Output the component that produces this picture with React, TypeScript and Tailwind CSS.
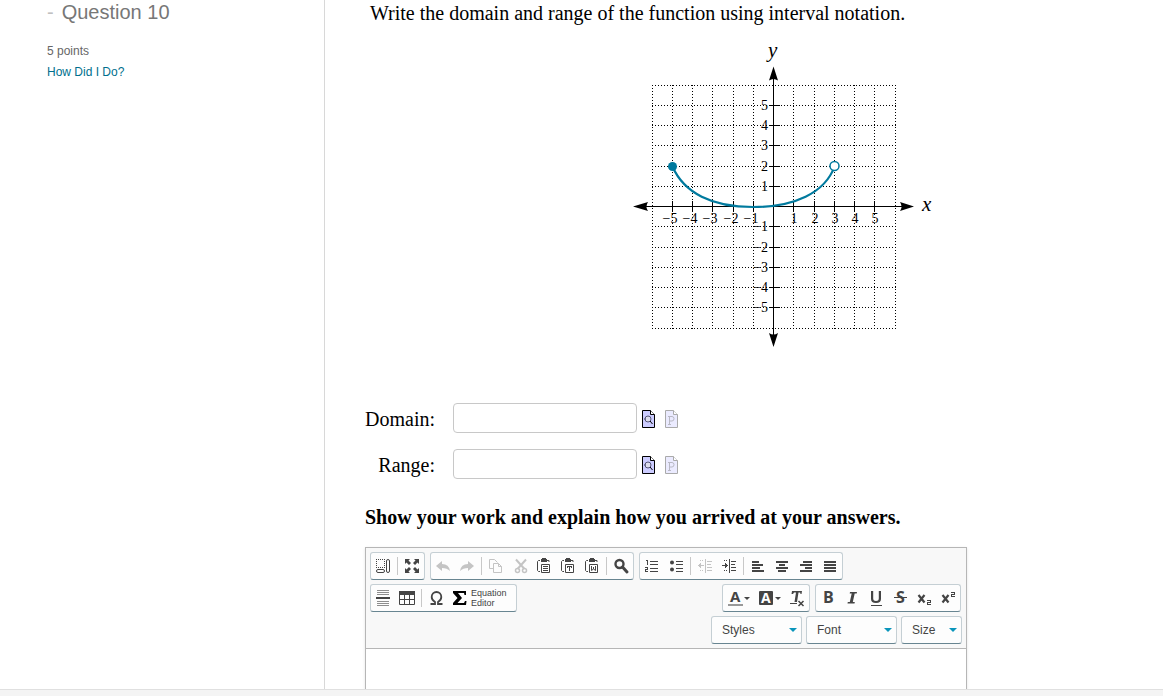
import type { ReactNode } from "react";

const INK = "#444";

/* ---------- graph ---------- */

const OX = 181.5;
const OY = 166.5;
const UNIT = 20.25;
const MARKS = [-5, -4, -3, -2, -1, 1, 2, 3, 4, 5];
const LINES = [-6, -5, -4, -3, -2, -1, 0, 1, 2, 3, 4, 5, 6];

const gx = (n: number) => Math.floor(OX + n * UNIT) + 0.5;
const gy = (n: number) => Math.floor(OY - n * UNIT) + 0.5;
const label = (n: number) => (n < 0 ? `−${-n}` : `${n}`);

function Graph() {
  return (
    <svg
      width="344"
      height="312"
      viewBox="0 0 344 312"
      role="img"
      aria-label="Graph of a function"
      fontFamily="'Liberation Serif', serif"
    >
      {/* whole-pixel ends keep the dots crisp */}
      <g stroke="#000" strokeWidth="1" strokeDasharray="1 2">
        {LINES.map((n) => (
          <g key={n}>
            <line x1={gx(n)} x2={gx(n)} y1={gy(6) - 0.5} y2={gy(-6) + 0.5} />
            <line y1={gy(n)} y2={gy(n)} x1={gx(-6) - 0.5} x2={gx(6) + 0.5} />
          </g>
        ))}
      </g>
      <g stroke="#000" strokeWidth="1">
        <line x1="50" x2="315" y1={OY} y2={OY} />
        <line x1={OX} x2={OX} y1="36" y2="298" />
        {MARKS.map((n) => (
          <g key={n}>
            <line x1={gx(n)} x2={gx(n)} y1={OY - 5.5} y2={OY + 5.5} />
            <line y1={gy(n)} y2={gy(n)} x1={OX - 4.5} x2={OX + 6.5} />
          </g>
        ))}
      </g>
      <path d="M41 166.500l15-4.500q-3 4.500 0 9z" />
      <path d="M322 166.500l-14-4.500q3 4.500 0 9z" />
      <path d="M181.500 26.500l-4.500 14q4.500-3 9 0z" />
      <path d="M181.500 307l-4.500-14q4.500 3 9 0z" />
      <g fontSize="14">
        {MARKS.map((n) => (
          <g key={n}>
            <text x={gx(n) + (n < 0 ? -10 : -3)} y="183">
              {label(n)}
            </text>
            <text x="176" y={gy(n) + 4.5} textAnchor="end">
              {label(n)}
            </text>
          </g>
        ))}
      </g>
      <text x="176" y="17" fontSize="21" fontStyle="italic">y</text>
      <text x="330" y="171" fontSize="21" fontStyle="italic">x</text>
      <path
        d="M80.500 126.500C92 153 120 167 161 167S233 153 242.500 126.500"
        fill="none"
        stroke="#007a9e"
        strokeWidth="2.200"
      />
      <circle cx="80.500" cy="126.500" r="4.500" fill="#007a9e" />
      <circle cx="242.500" cy="126" r="4.500" fill="#fff" stroke="#007a9e" strokeWidth="1.500" />
    </svg>
  );
}

/* ---------- answer rows ---------- */

function PreviewIcon() {
  return (
    <svg width="13" height="18" viewBox="0 0 13 18">
      <path d="M.5.5h8l4 4v13H.5z" fill="#ccf" stroke="#000" />
      <path d="M8.500.5v4h4" fill="#fff" stroke="#000" />
      <circle cx="6" cy="9" r="3" fill="#dde" stroke="#557" />
      <path d="M8 11l2.500 3" stroke="#000" />
      <path d="M2 9h2" stroke="#557" />
    </svg>
  );
}

function PaletteIcon() {
  return (
    <svg width="13" height="18" viewBox="0 0 13 18">
      <path d="M.5.5h8l4 4v13H.5z" fill="#ebebff" stroke="#aaa" />
      <path d="M8.500.5v4h4" fill="#fff" stroke="#aaa" />
      <path d="M3 6.500h4q2 0 2 2.200t-2 2.300H5M4.500 6.500v8M3 14.500h3" fill="none" stroke="#b8b8c4" />
    </svg>
  );
}

function AnswerRow({ id, text }: { id: string; text: string }) {
  return (
    <div className="flex items-center">
      <label htmlFor={id} className="mr-[18px] w-[70px] pt-px text-right">
        {text}
      </label>
      <input
        id={id}
        type="text"
        className="h-[30px] w-[184px] rounded border border-[#c8c8c8] bg-white px-2 text-sm"
      />
      <button type="button" aria-label={`Preview ${id}`} className="ml-[5px] pt-[2px]">
        <PreviewIcon />
      </button>
      <button type="button" aria-label={`Palette ${id}`} className="ml-[10px] pt-[2px]">
        <PaletteIcon />
      </button>
    </div>
  );
}

/* ---------- toolbar ---------- */

function Icon({ children }: { children: ReactNode }) {
  return (
    <svg
      width="16"
      height="16"
      viewBox="0 0 16 16"
      fill={INK}
      fontFamily="'Open Sans', sans-serif"
      className="overflow-visible"
    >
      {children}
    </svg>
  );
}

function Group({ children }: { children: ReactNode }) {
  return (
    <div className="flex h-7 items-center rounded-[3px] border border-[#c5cfd4] border-b-[#688591] bg-[#fdfdfd]">
      {children}
    </div>
  );
}

function Tool({ name, disabled, children }: { name: string; disabled?: boolean; children: ReactNode }) {
  return (
    <button
      type="button"
      aria-label={name}
      disabled={disabled}
      className="flex h-[26px] w-6 items-center justify-center disabled:opacity-30"
    >
      <Icon>{children}</Icon>
    </button>
  );
}

function ColorTool({ name, children }: { name: string; children: ReactNode }) {
  return (
    <button type="button" aria-label={name} className="flex h-[26px] w-[31px] items-center pl-1">
      <Icon>{children}</Icon>
      <svg width="6" height="3" viewBox="0 0 6 3" fill={INK} className="ml-px">
        <path d="M0 0h6L3 3z" />
      </svg>
    </button>
  );
}

function Sep() {
  return <span className="mx-[2px] h-[18px] w-px bg-[#c8c8c8]" />;
}

function Clipboard({ children }: { children: ReactNode }) {
  return (
    <g transform="translate(1 0)">
      <path d="M3 2.500H1.500L.5 3.500v9l1 1H3M10 2.500h2V4" fill="none" stroke={INK} />
      <path d="M4 1h1V0h4v1h1v3H4z" />
      <path d="M4.500 6.500h8v8h-8z" fill="#fff" stroke={INK} />
      {children}
    </g>
  );
}

function Lines({ rows }: { rows: [number, number][] }) {
  return (
    <>
      {rows.map(([offset, width], i) => (
        <rect key={i} x={2 + offset} y={3 + i * 3} width={width} height="2" />
      ))}
    </>
  );
}

function Combo({ name, wide }: { name: string; wide?: boolean }) {
  return (
    <div className={wide ? "relative w-[91px]" : "relative w-[61px]"}>
      <select
        aria-label={name}
        className="block h-7 w-full appearance-none rounded-[3px] border border-[#c5cfd4] border-b-[#688591] bg-[#fdfdfd] pl-[10px] text-xs text-[#444]"
      >
        <option>{name}</option>
      </select>
      <svg width="8" height="4" viewBox="0 0 8 4" className="pointer-events-none absolute top-3 right-[5px]">
        <path d="M0 0h8L4 4z" fill="#0a95bb" />
      </svg>
    </div>
  );
}

function Toolbar() {
  return (
    <div className="flex flex-col gap-1 border-b border-[#b6b6b6] bg-[#f8f8f8] py-1 pl-1 font-['Liberation_Sans',sans-serif]">
      <div className="flex gap-[5px]">
        <Group>
          <Tool name="Show blocks">
            <path d="M1 1.500h9M1 9.500h9M1.500 1v9M9.500 1v9" fill="none" stroke={INK} strokeDasharray="1 1" />
            <rect x="1.500" y="11.500" width="8" height="3" rx="1.500" fill="none" stroke={INK} />
            <rect x="11.500" y="1.500" width="3" height="13" rx="1.500" fill="none" stroke={INK} />
          </Tool>
          <Sep />
          <Tool name="Maximize">
            <path d="M1 1h5L4.500 2.500 7 5 5 7 2.500 4.500 1 6zM15 1v5l-1.500-1.500L11 7 9 5l2.500-2.500L10 1zM1 15v-5l1.500 1.500L5 9l2 2-2.500 2.500L6 15zM15 15h-5l1.500-1.500L9 11l2-2 2.500 2.500L15 10z" />
          </Tool>
        </Group>
        <Group>
          <Tool name="Undo" disabled>
            <path d="M1 8l6-5v3q7 0 8 7-3-3-8-3v3z" />
          </Tool>
          <Tool name="Redo" disabled>
            <path d="M15 8L9 3v3q-7 0-8 7 3-3 8-3v3z" />
          </Tool>
          <Sep />
          <Tool name="Copy" disabled>
            <path d="M5 10.500H1.500v-9h5l3 3" fill="none" stroke={INK} />
            <path d="M5.500 5.500h5l3 3v6h-8zM10.500 5.500v3h3" fill="none" stroke={INK} />
          </Tool>
          <Tool name="Cut" disabled>
            <path d="M4 1.500L12.500 11M14 1.500L5.500 11" fill="none" stroke={INK} strokeWidth="2" />
            <circle cx="5.500" cy="12.500" r="2" fill="none" stroke={INK} strokeWidth="1.500" />
            <circle cx="12.500" cy="12.500" r="2" fill="none" stroke={INK} strokeWidth="1.500" />
          </Tool>
          <Tool name="Paste">
            <Clipboard>
              <path d="M6 8h5v1H6zM6 10h5v1H6zM6 12h5v1H6z" />
            </Clipboard>
          </Tool>
          <Tool name="Paste as plain text">
            <Clipboard>
              <path d="M6 8h5v2h-1V9H9v4H8V9H7v1H6z" />
            </Clipboard>
          </Tool>
          <Tool name="Paste from Word">
            <Clipboard>
              <path d="M6.500 8v4.500l2-1.500 2 1.500V8M8.500 9v2" fill="none" stroke={INK} />
            </Clipboard>
          </Tool>
          <Sep />
          <Tool name="Find">
            <circle cx="6.500" cy="6" r="4" fill="none" stroke={INK} strokeWidth="2.400" />
            <path d="M9.500 9l4.500 5" stroke={INK} strokeWidth="3" strokeLinecap="round" />
          </Tool>
        </Group>
        <Group>
          <Tool name="Numbered list">
            <path d="M2 2h2v5H3V3H2zM1 9h3v3H2v1h2v1H1v-3h2v-1H1z" />
            <path d="M6 3h8v1H6zM6 6h8v1H6zM6 10h8v1H6zM6 13h8v1H6z" />
          </Tool>
          <Tool name="Bulleted list">
            <circle cx="4" cy="4.500" r="2" />
            <circle cx="4" cy="11.500" r="2" />
            <path d="M8 3h7v1H8zM8 6h7v1H8zM8 10h7v1H8zM8 13h7v1H8z" />
          </Tool>
          <Sep />
          <Tool name="Decrease indent" disabled>
            <path d="M8 1h1v14H8zM10 3h5v1h-5zM10 6h4v1h-4zM10 9h5v1h-5zM10 12h5v1h-5zM1 7h6v1H1zM2 6h1v3H2zM3 5h1v5H3zM3 2h1v1H3zM5 2h1v1H5zM3 12h1v1H3zM5 12h1v1H5z" />
          </Tool>
          <Tool name="Increase indent">
            <path d="M8 1h1v14H8zM10 3h5v1h-5zM10 6h4v1h-4zM10 9h5v1h-5zM10 12h5v1h-5zM1 7h6v1H1zM5 6h1v3H5zM4 5h1v5H4zM3 2h1v1H3zM5 2h1v1H5zM3 12h1v1H3zM5 12h1v1H5z" />
          </Tool>
          <Sep />
          <Tool name="Align left">
            <Lines rows={[[0, 7], [0, 11], [0, 8], [0, 12]]} />
          </Tool>
          <Tool name="Center">
            <Lines rows={[[0, 12], [3, 6], [0, 12], [2, 8]]} />
          </Tool>
          <Tool name="Align right">
            <Lines rows={[[3, 9], [0, 12], [5, 7], [0, 12]]} />
          </Tool>
          <Tool name="Justify">
            <Lines rows={[[0, 12], [0, 12], [0, 12], [0, 12]]} />
          </Tool>
        </Group>
      </div>

      <div className="flex justify-between pr-[5px]">
        <Group>
          <Tool name="Horizontal line">
            <path d="M2 0h12v1H2zM2 2h12v1H2zM2 4h12v1H2zM2 11h12v1H2zM2 13h12v1H2zM2 15h12v1H2z" opacity=".6" />
            <path d="M1 7h14v2H1z" />
          </Tool>
          <Tool name="Table">
            <path d="M0 1h16v4H0z" />
            <path d="M.5 4.500h15v10H.5zM5.500 5v9M10.500 5v9M1 9.500h14" fill="none" stroke={INK} />
          </Tool>
          <Sep />
          <Tool name="Special character">
            <path
              d="M2.500 14H7v-2C4.500 10.500 3.700 9 3.700 7a4.800 5 0 0 1 9.600 0c0 2-.8 3.500-3.300 5v2h4.500"
              fill="none"
              stroke={INK}
              strokeWidth="1.800"
            />
          </Tool>
          <button
            type="button"
            className="flex h-[26px] w-[68px] items-center gap-[3px] pl-1 text-left text-[9px] leading-[10px] text-[#444]"
          >
            <svg width="16" height="16" viewBox="0 0 16 16" aria-hidden>
              <path d="M1 1h13v4h-1.500L12 3H6l4 5-4.500 5H12l1-2h1.500L14 15H1v-2l4.500-5L1 3z" />
            </svg>
            <span>
              Equation
              <br />
              Editor
            </span>
          </button>
        </Group>
        <div className="flex gap-[5px]">
          <Group>
            <ColorTool name="Text color">
              <text x="3" y="12" fontSize="15" fontWeight="700">A</text>
              <rect x="1" y="14" width="15" height="2" fill="#999" />
            </ColorTool>
            <ColorTool name="Background color">
              <rect x="1" y="1" width="14" height="14" rx="1" />
              <text x="3" y="13" fontSize="14" fontWeight="700" fill="#fff">A</text>
            </ColorTool>
            <Tool name="Remove format">
              <path d="M3 1h10l-.5 3h-1l-.3-1.500H9.500L8 12H5.500L7 2.500H5L4 4H2.500zM1 13h7v1H1z" />
              <path d="M9.500 11l5 5M14.500 11l-5 5" stroke={INK} strokeWidth="1.500" />
            </Tool>
          </Group>
          <Group>
            <Tool name="Bold">
              <text x="3" y="13" fontSize="16" fontWeight="700">B</text>
            </Tool>
            <Tool name="Italic">
              <path d="M6 2h7l-.3 1.500h-2L8.800 12h2l-.3 1.500h-7L3.800 12h2l1.900-8.500h-2z" />
            </Tool>
            <Tool name="Underline">
              <path d="M3 1h2.200v7.500q0 2.500 2.800 2.500t2.800-2.500V1H13v8q0 4-5 4T3 9zM3 15h11v1H3z" />
            </Tool>
            <Tool name="Strikethrough">
              <text x="4" y="13" fontSize="16" fontWeight="700">S</text>
              <rect x="2" y="7" width="13" height="1" />
            </Tool>
            <Tool name="Subscript">
              <path d="M2.500 5l6 7.500M8.500 5l-6 7.500" stroke={INK} strokeWidth="2.200" />
              <path d="M11 10h4v3h-3v1h3v1h-4v-3h3v-1h-3z" />
            </Tool>
            <Tool name="Superscript">
              <path d="M2.500 5l6 7.500M8.500 5l-6 7.500" stroke={INK} strokeWidth="2.200" />
              <path d="M11 2h4v3h-3v1h3v1h-4V4h3V3h-3z" />
            </Tool>
          </Group>
        </div>
      </div>

      <div className="flex justify-end gap-1 pr-1">
        <Combo name="Styles" wide />
        <Combo name="Font" wide />
        <Combo name="Size" />
      </div>
    </div>
  );
}

export default function App() {
  return (
    <div className="flex h-screen flex-col overflow-hidden bg-white">
      <div className="flex min-h-0 flex-1">
        <aside className="w-[325px] shrink-0 border-r border-[#d8d8d8] pl-[47px] font-['Liberation_Sans',sans-serif]">
          <h2 className="flex gap-2 text-xl leading-6 text-[#777]">
            <span className="text-[#c0c0c0]">-</span>
            Question 10
          </h2>
          <p className="mt-[17px] text-xs leading-[21px] text-[#666]">5 points</p>
          <a href="#how" className="block text-xs leading-[21px] text-[#006f8e]">
            How Did I Do?
          </a>
        </aside>

        <main className="min-w-0 flex-1 overflow-hidden pl-10 font-['Liberation_Serif',serif] text-[20px] leading-[26px] text-black">
          <p className="pl-[5px]">Write the domain and range of the function using interval notation.</p>
          <div className="mt-[14px] flex justify-center">
            <Graph />
          </div>
          <div className="mt-[51px] flex flex-col gap-4">
            <AnswerRow id="domain" text="Domain:" />
            <AnswerRow id="range" text="Range:" />
          </div>
          <p className="mt-[25px] font-bold">Show your work and explain how you arrived at your answers.</p>
          <div className="mt-[17px] max-w-[602px] border border-[#b6b6b6] shadow-sm">
            <Toolbar />
            <textarea aria-label="Answer" className="block h-48 w-full resize-none bg-white p-5 text-base outline-none" />
          </div>
        </main>
      </div>
      <footer className="h-[7px] shrink-0 border-t border-[#e0e0e0] bg-[#f4f4f4]" />
    </div>
  );
}
